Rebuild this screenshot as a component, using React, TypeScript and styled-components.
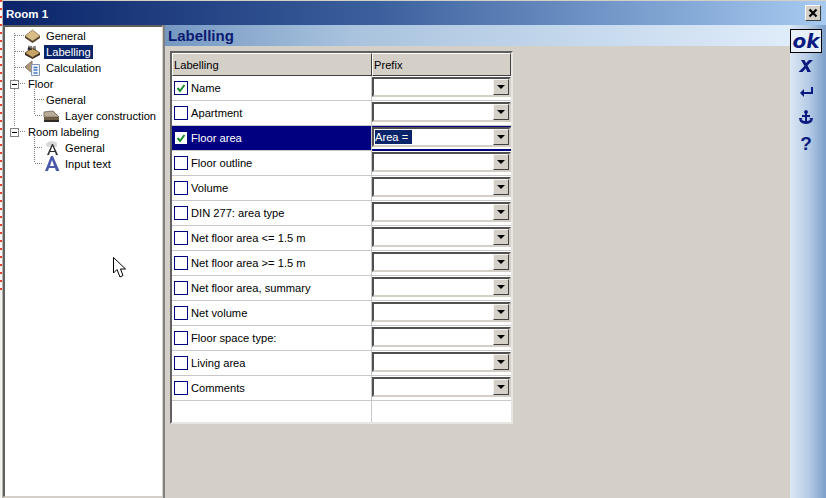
import React from "react";
import styled, { createGlobalStyle } from "styled-components";

const Global = createGlobalStyle`
  html, body { margin: 0; padding: 0; background: #d4d0c8; overflow: hidden; }
  #root { width: 826px; height: 498px; }
  * { box-sizing: border-box; }
`;

const Page = styled.div`
  position: relative;
  width: 826px;
  height: 498px;
  display: flex;
  background: #d4d0c8;
  font-family: "Liberation Sans", Arial, sans-serif;
  font-size: 11.15px;
  color: #000;
  overflow: hidden;
`;
const CanvasEdge = styled.div`
  width: 3px;
  flex: none;
  background:
    repeating-linear-gradient(to bottom, #f04030 0 2px, #fff 2px 8px) 0 0 / 2px 290px no-repeat,
    #f4f3f0;
  border-right: 1px solid #b8b5ae;
`;
const Win = styled.div`
  flex: 1;
  display: flex;
  flex-direction: column;
  min-width: 0;
  padding-top: 1px;
`;
const TitleBar = styled.div`
  height: 24px;
  flex: none;
  display: flex;
  align-items: center;
  justify-content: space-between;
  padding: 2px 5px 0 3px;
  background: linear-gradient(to right, #0a246a 0%, #3b5f9c 45%, #a6caf0 100%);
  color: #fff;
  font-weight: bold;
  font-size: 11.5px;
`;
const CloseBtn = styled.div`
  width: 16px;
  height: 16px;
  margin-top: -3px;
  background: #d4d0c8;
  border: 1px solid;
  border-color: #fff #404040 #404040 #fff;
  display: flex;
  align-items: center;
  justify-content: center;
`;
const Body = styled.div`
  flex: 1;
  display: flex;
  min-height: 0;
`;
const TreePanel = styled.div`
  position: relative;
  width: 160px;
  flex: none;
  background: #fff;
  border-left: 2px solid #606060;
  border-top: 2px solid #606060;
  border-right: 1px solid #d4d0c8;
  border-bottom: 1px solid #d4d0c8;
  margin-bottom: 1px;
  padding-top: 1px;
`;
const TreeLines = styled.svg`
  position: absolute;
  left: -2px;
  top: -2px;
  pointer-events: none;
`;
const TreeRow = styled.div<{ $x: number }>`
  position: relative;
  height: 16px;
  display: flex;
  align-items: center;
  padding-left: ${(p) => p.$x}px;
  gap: 3px;
`;
const TreeLabel = styled.span<{ $selected?: boolean }>`
  padding: 0 2px;
  height: 14px;
  line-height: 14px;
  white-space: nowrap;
  color: ${(p) => (p.$selected ? "#fff" : "#000")};
  background: ${(p) => (p.$selected ? "#0a246a" : "transparent")};
`;
const Expander = styled.span`
  width: 9px;
  height: 9px;
  flex: none;
  margin-right: 4px;
  border: 1px solid #808080;
  background: #fff;
  display: flex;
  align-items: center;
  justify-content: center;
  &::after { content: ""; width: 5px; height: 1px; background: #000; }
`;
const Sash = styled.div`
  width: 2px;
  flex: none;
  background: #808080;
`;
const Main = styled.div`
  flex: 1;
  display: flex;
  flex-direction: column;
  min-width: 0;
`;
const Heading = styled.div`
  height: 21px;
  flex: none;
  padding-left: 3px;
  line-height: 21px;
  font-size: 15px;
  font-weight: bold;
  color: #0a1a70;
  background: linear-gradient(to right, #7598c2 0%, #a9c3de 30%, #dfecfa 100%);
`;
const Grid = styled.div`
  width: 343px;
  margin: 5px 0 0 5px;
  display: grid;
  grid-template-columns: 200px 1fr;
  grid-template-rows: 23px repeat(13, 25px) 21px;
  background: #fff;
  border: 2px solid;
  border-color: #606060 #e8e6e2 #e8e6e2 #606060;
`;
const HeadCell = styled.div`
  background: #d4d0c8;
  border: 1px solid;
  border-color: #fff #404040 #404040 #fff;
  padding: 0 0 0 1px;
  display: flex;
  align-items: center;
`;
const NameCell = styled.div<{ $active?: boolean }>`
  display: flex;
  align-items: center;
  gap: 3px;
  padding: 0 0 0 2px;
  background: ${(p) => (p.$active ? "#000080" : "#fff")};
  color: ${(p) => (p.$active ? "#fff" : "#000")};
  border-bottom: 1px solid #c8c8c8;
  border-right: 1px solid #c8c8c8;
`;
const PrefixCell = styled.div<{ $active?: boolean }>`
  padding: ${(p) => (p.$active ? "0" : "1px")} 0 1px 0;
  border-bottom: ${(p) => (p.$active ? "2px solid #000080" : "1px solid #c8c8c8")};
  border-top: ${(p) => (p.$active ? "1px solid #000080" : "none")};
  background: #fff;
`;
const EmptyCell = styled.div<{ $line?: boolean }>`
  border-right: ${(p) => (p.$line ? "1px solid #c8c8c8" : "none")};
`;
const Box = styled.span`
  width: 14px;
  height: 14px;
  flex: none;
  background: #fff;
  border: 1px solid #000080;
  display: flex;
  align-items: center;
  justify-content: center;
`;
const Combo = styled.div`
  height: 20px;
  display: flex;
  align-items: center;
  background: #fff;
  border: 2px solid;
  border-color: #505050 #d4d0c8 #d4d0c8 #505050;
  padding-left: 1px;
`;
const ComboText = styled.div`
  flex: 1;
  min-width: 0;
`;
const Selected = styled.span`
  background: #0a246a;
  color: #fff;
  padding: 0 1px 0 0;
  display: inline-block;
  line-height: 14px;
  white-space: pre;
`;
const Drop = styled.div`
  width: 16px;
  height: 16px;
  flex: none;
  background: #d4d0c8;
  border: 1px solid;
  border-color: #f4f3f0 #404040 #404040 #f4f3f0;
  display: flex;
  align-items: center;
  justify-content: center;
  &::after {
    content: "";
    border-left: 4px solid transparent;
    border-right: 4px solid transparent;
    border-top: 4px solid #000;
  }
`;
const ToolBar = styled.div`
  width: 36px;
  flex: none;
  display: flex;
  flex-direction: column;
  align-items: flex-start;
  padding-top: 4px;
  background: linear-gradient(to right, #dbe7f4 0%, #b7cde6 50%, #7c9fca 100%);
  color: #0a1a80;
`;
const Tool = styled.div<{ $active?: boolean; $h: number }>`
  width: 32px;
  height: ${(p) => p.$h}px;
  flex: none;
  display: flex;
  align-items: center;
  justify-content: center;
  border: ${(p) => (p.$active ? "1px solid #000" : "none")};
  background: ${(p) => (p.$active ? "#e8f0fa" : "transparent")};
  font-family: "DejaVu Sans", "Liberation Sans", sans-serif;
  font-style: italic;
  font-weight: bold;
  font-size: 20px;
  line-height: 1;
`;
const Question = styled.span`
  font-family: "Liberation Sans", sans-serif;
  font-style: normal;
  font-size: 19px;
`;
const Cursor = styled.svg`
  position: absolute;
  left: 113px;
  top: 257px;
`;

const GeneralIcon = () => (
  <svg width="17" height="15" viewBox="0 0 17 15">
    <path d="M8.5 1L16 7l-7.500 5L1 7z" fill="#d8bd86" stroke="#9a8660" />
    <path d="M1 7l7.500 5 7.500-5v2l-7.500 5L1 9z" fill="#57452f" />
  </svg>
);
const LabelIcon = () => (
  <svg width="17" height="15" viewBox="0 0 17 15">
    <path d="M8.500 3L16 8l-7.500 4.500L1 8z" fill="#c8a464" stroke="#6a5030" />
    <path d="M1 8l7.500 4.500L16 8v2l-7.500 4L1 10z" fill="#3a2c20" />
    <path d="M4 5l1-3 1 3M7 1v4M9 2h3M9 4h3" stroke="#222" strokeWidth="1.2" fill="none" />
  </svg>
);
const CalcIcon = () => (
  <svg width="17" height="16" viewBox="0 0 17 16">
    <path d="M8 1L1 7l7 6z" fill="#b09878" stroke="#807060" />
    <path d="M7.500 4.500h8v11h-8z" fill="#eef3fa" stroke="#8494b0" />
    <path d="M9.500 7.500h4M9.500 10h4M9.500 13h4" stroke="#4a78c0" strokeWidth="1.300" />
  </svg>
);
const LayerIcon = () => (
  <svg width="17" height="15" viewBox="0 0 17 15">
    <path d="M1 3l9-1 6 6H1z" fill="#b8ab98" stroke="#807565" />
    <path d="M1 8h15v3H1z" fill="#6e5c46" />
    <path d="M1 11h15v2H1z" fill="#2f2a24" />
  </svg>
);
const TextGreyIcon = () => (
  <svg width="17" height="16" viewBox="0 0 17 16">
    <path d="M3 5a6 4 0 0 1 11-2v4H4z" fill="#d8d8d8" />
    <path d="M9 4L4 15h2l1-3h5l1 3h2L10 4zM7.500 11L9.500 6l2 5z" fill="#303030" />
  </svg>
);
const TextBlueIcon = () => (
  <svg width="17" height="16" viewBox="0 0 17 16">
    <path d="M8 0L2 15h3l1-3h6l1 3h3.500L10 0zM7 10l2-6 2.200 6z" fill="#4a5aa8" />
  </svg>
);
const XIcon = () => (
  <svg width="10" height="10" viewBox="0 0 10 10">
    <path d="M1.500 1.500l7 7M8.500 1.500l-7 7" stroke="#000" strokeWidth="2.200" />
  </svg>
);
const Check = () => (
  <svg width="12" height="12" viewBox="0 0 12 12">
    <path d="M2.500 6l2.500 3 4.500-6" stroke="#1a8a2a" strokeWidth="2" fill="none" />
  </svg>
);

const labels = [
  ["Name", true],
  ["Apartment", false],
  ["Floor area", true],
  ["Floor outline", false],
  ["Volume", false],
  ["DIN 277: area type", false],
  ["Net floor area <= 1.5 m", false],
  ["Net floor area >= 1.5 m", false],
  ["Net floor area, summary", false],
  ["Net volume", false],
  ["Floor space type:", false],
  ["Living area", false],
  ["Comments", false],
] as const;

export default function App() {
  return (
    <Page>
      <Global />
      <CanvasEdge />
      <Win>
        <TitleBar>
          Room 1
          <CloseBtn>
            <XIcon />
          </CloseBtn>
        </TitleBar>
        <Body>
          <TreePanel>
            <TreeLines width="160" height="170" viewBox="4 26 160 170">
              <g stroke="#808080" strokeDasharray="1 1" fill="none" shapeRendering="crispEdges">
                <path d="M15.500 34V128M16 36.500H25M16 52.500H25M16 68.500H25M21 84.500H27M21 132.500H27" />
                <path d="M35.500 90V116M36 100.500H45M36 116.500H44M35.500 138V164M36 148.500H44M36 164.500H44" />
              </g>
            </TreeLines>
            <TreeRow $x={19}>
              <GeneralIcon />
              <TreeLabel>General</TreeLabel>
            </TreeRow>
            <TreeRow $x={19}>
              <LabelIcon />
              <TreeLabel $selected>Labelling</TreeLabel>
            </TreeRow>
            <TreeRow $x={19}>
              <CalcIcon />
              <TreeLabel>Calculation</TreeLabel>
            </TreeRow>
            <TreeRow $x={5}>
              <Expander />
              <TreeLabel>Floor</TreeLabel>
            </TreeRow>
            <TreeRow $x={39}>
              <TreeLabel>General</TreeLabel>
            </TreeRow>
            <TreeRow $x={38}>
              <LayerIcon />
              <TreeLabel>Layer construction</TreeLabel>
            </TreeRow>
            <TreeRow $x={5}>
              <Expander />
              <TreeLabel>Room labeling</TreeLabel>
            </TreeRow>
            <TreeRow $x={38}>
              <TextGreyIcon />
              <TreeLabel>General</TreeLabel>
            </TreeRow>
            <TreeRow $x={38}>
              <TextBlueIcon />
              <TreeLabel>Input text</TreeLabel>
            </TreeRow>
          </TreePanel>
          <Sash />
          <Main>
            <Heading>Labelling</Heading>
            <Grid>
              <HeadCell>Labelling</HeadCell>
              <HeadCell>Prefix</HeadCell>
              {labels.map(([label, checked], i) => {
                const active = i === 2;
                return (
                  <React.Fragment key={label}>
                    <NameCell $active={active}>
                      <Box>{checked && <Check />}</Box>
                      {label}
                    </NameCell>
                    <PrefixCell $active={active}>
                      <Combo>
                        <ComboText>{active && <Selected>Area = </Selected>}</ComboText>
                        <Drop />
                      </Combo>
                    </PrefixCell>
                  </React.Fragment>
                );
              })}
              <EmptyCell $line />
              <EmptyCell />
            </Grid>
          </Main>
          <ToolBar>
            <Tool $active $h={24}>ok</Tool>
            <Tool $h={26}>
              <svg width="16" height="14" viewBox="0 0 16 14">
                <path d="M3 1h3.500l1.500 3 3-3h4l-5.500 5.500L13 13H9.300L7.800 9.600 4.500 13H.5l6-6z" fill="#0a1a80" />
              </svg>
            </Tool>
            <Tool $h={26}>
              <svg width="15" height="12" viewBox="0 0 15 12">
                <path d="M13 1v6H3" stroke="#0a1a80" strokeWidth="2" fill="none" />
                <path d="M5 3L1 7l4 4z" fill="#0a1a80" />
              </svg>
            </Tool>
            <Tool $h={24}>
              <svg width="16" height="14" viewBox="0 0 16 14">
                <path d="M8 0a2 2 0 0 1 1 3.700V5h3v2H9v4c2 0 3-1 3.500-2L11 8h4l-.7 3c-1 2-4 3-6.300 3S2.700 13 1.700 11L1 8h4L3.500 9C4 10 5 11 7 11V7H4V5h3V3.700A2 2 0 0 1 8 0z" fill="#0a1a80" />
              </svg>
            </Tool>
            <Tool $h={28}>
              <Question>?</Question>
            </Tool>
          </ToolBar>
        </Body>
      </Win>
      <Cursor width="14" height="22" viewBox="0 0 14 22">
        <path d="M.5.500V16l3.500-3.500L7 20l3-1.500L7.500 12H12.500z" fill="#fff" stroke="#000" />
      </Cursor>
    </Page>
  );
}
